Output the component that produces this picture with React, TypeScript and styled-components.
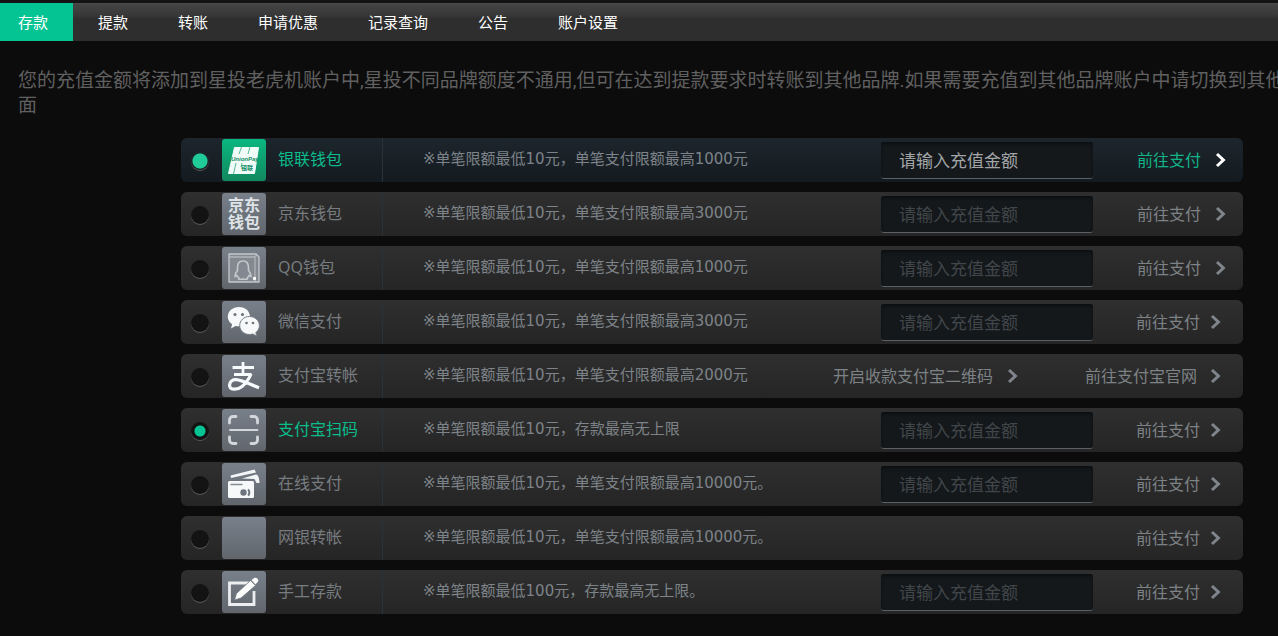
import React from "react";
import styled, { createGlobalStyle, css } from "styled-components";

const GREEN = "#05c493";

const GlobalStyle = createGlobalStyle`
  *, *::before, *::after { box-sizing: border-box; }
  body {
    margin: 0;
    background: #0c0c0c;
    color: #7b8085;
    font-family: "Noto Sans", "Noto Sans CJK SC", sans-serif;
    overflow-x: hidden;
  }
`;

const Page = styled.div`
  border-top: 3px solid #131313;
  overflow: hidden;
  padding-bottom: 20px;
`;

const NavBar = styled.nav`
  display: flex;
  height: 38px;
  background: linear-gradient(#4a4a4a 0, #434343 2px, #383838 12px, #2e2e2e 16px, #2e2e2e 100%);
`;

const NavLink = styled.a<{ $current?: boolean }>`
  display: flex;
  align-items: center;
  padding: 0 25px;
  font-family: "Noto Sans CJK SC", sans-serif;
  font-size: 15px;
  line-height: 22px;
  color: #fff;
  text-decoration: none;
  ${(p) =>
    p.$current &&
    css`
      padding-left: 18px;
      background: ${GREEN};
    `}
`;

const Notice = styled.p`
  margin: 27px 0 0;
  padding-left: 18px;
  font-family: Roboto, "Noto Sans CJK SC", sans-serif;
  font-size: 19px;
  line-height: 25px;
  color: #606060;
  white-space: nowrap;
`;

const MethodList = styled.form`
  display: flex;
  flex-direction: column;
  gap: 10px;
  margin: 20px 35px 0 181px;
`;

const Row = styled.div<{ $active?: boolean }>`
  display: flex;
  align-items: center;
  height: 44px;
  padding-left: 10px;
  border-radius: 6px;
  background: ${(p) =>
    p.$active ? "linear-gradient(#1e262d, #131a20)" : "linear-gradient(#2f2f2f, #252525)"};
`;

const Radio = styled.input<{ $large?: boolean }>`
  appearance: none;
  flex: none;
  width: 18px;
  height: 18px;
  margin: 2px 13px 0 0;
  border-radius: 50%;
  background: #131313;
  box-shadow: 0 1px 0 #5a5a5a;
  &:checked {
    background: ${(p) =>
      p.$large
        ? "radial-gradient(circle at 9px 9px, #20cc98 7px, #1c2a2c 8px)"
        : `radial-gradient(circle, ${GREEN} 5px, #131313 6px)`};
  }
`;

const MethodLabel = styled.label<{ $green?: boolean }>`
  display: flex;
  align-items: center;
  gap: 12px;
  flex: none;
  width: 161px;
  height: 44px;
  border-right: 1px solid #28323a;
  font-size: 16px;
  line-height: 22px;
  color: ${(p) => (p.$green ? "#0bbd8b" : "#777c80")};
`;

const MethodName = styled.span`
  padding-bottom: 3px;
`;

const Tile = styled.svg<{ $active?: boolean }>`
  flex: none;
  width: 44px;
  height: 42px;
  border-radius: 3px;
  background: ${(p) =>
    p.$active ? "linear-gradient(#0ab67f, #12895f)" : "linear-gradient(#78808a, #61666d)"};
`;

const Limit = styled.span`
  flex: 1;
  min-width: 0;
  padding: 0 0 3px 40px;
  font-family: "DejaVu Sans", "Noto Sans CJK SC", sans-serif;
  font-size: 15px;
  line-height: 22px;
  color: #7d8388;
  white-space: nowrap;
`;

const Amount = styled.input<{ $active?: boolean }>`
  flex: none;
  width: 212px;
  height: 37px;
  padding: 0 18px;
  border: 0;
  border-bottom: 1px solid #5b6166;
  border-radius: 3px;
  outline: 0;
  background: #14181b;
  box-shadow: inset 0 2px 3px #0c0f11;
  color: #b4b7b9;
  font-family: "Noto Sans CJK SC", sans-serif;
  font-size: 17px;
  line-height: 24px;
  &::placeholder {
    opacity: 1;
    color: ${(p) => (p.$active ? "#a3a6a8" : "#41464a")};
  }
`;

const Action = styled.a<{ $active?: boolean; $wide?: boolean }>`
  display: flex;
  align-items: center;
  justify-content: flex-end;
  gap: ${(p) => (p.$wide ? 14 : 10)}px;
  flex: none;
  width: 150px;
  padding-right: ${(p) => (p.$wide ? 17 : 22)}px;
  font-size: 16px;
  line-height: 22px;
  white-space: nowrap;
  text-decoration: none;
  color: ${(p) => (p.$active ? "#12b487" : "#7d8286")};
`;

const SiteAction = styled(Action)`
  width: auto;
  gap: 13px;
`;

const QrAction = styled(Action)`
  width: auto;
  padding-right: 67px;
`;

const ChevronSvg = styled.svg`
  flex: none;
  width: 11px;
  height: 16px;
`;

function Chevron({ color = "#7f858b" }: { color?: string }) {
  return (
    <ChevronSvg viewBox="0 0 11 16" aria-hidden="true">
      <path d="M2 2l6.400 6L2 14" fill="none" stroke={color} strokeWidth="3" />
    </ChevronSvg>
  );
}

type IconName = "union" | "jd" | "qq" | "wechat" | "alipay" | "scan" | "card" | "blank" | "edit";

const drawings: Record<IconName, React.ReactNode> = {
  union: (
    <>
      <path d="M12.500 8.500H36.500L32.500 34.500H6.500z" fill="#f1fbf7" stroke="#f1fbf7" strokeLinejoin="round" />
      <path d="M19.500 8l-2.500 7M28 8l-2 7M14 24l-2.500 11M20 24l-1 4" stroke="#58b996" strokeWidth="1" />
      <text x="9" y="22" fontSize="6" fontWeight="700" fontStyle="italic" fontFamily="Liberation Sans, sans-serif" fill="#128b65">
        UnionPay
      </text>
      <text x="19" y="31" fontSize="6" fontWeight="700" fontFamily="Noto Sans CJK SC, sans-serif" fill="#128b65">
        银联
      </text>
    </>
  ),
  jd: (
    <g fontSize="16" fontWeight="700" fontFamily="Noto Sans CJK SC, sans-serif" fill="#dfe3e6">
      <text x="6" y="18">京东</text>
      <text x="6" y="35">钱包</text>
    </g>
  ),
  qq: (
    <g fill="none" stroke="#c3c8cd" strokeWidth="1.3">
      <path d="M7 7h27l3 3v25H7z" fill="#838990" />
      <path d="M7 10h26v25M33 10l2-3" opacity="0.7" />
      <path
        d="M21 14c-4 0-5.500 3-5.500 6.500v3c-2 2-2.500 4-2.500 6l2-1c.5 1 1 1.800 1.800 2.500-1 1.500 1 1.500 4.200 1 3.200.5 5.200.5 4.200-1 .8-.7 1.300-1.500 1.800-2.500l2 1c0-2-.5-4-2.500-6v-3c0-3.500-1.500-6.500-5.500-6.500z"
        strokeWidth="1.600"
      />
      <circle cx="32.500" cy="31.500" r="1" fill="#fff" stroke="#fff" />
    </g>
  ),
  wechat: (
    <>
      <path d="M17 6C10.500 6 5.800 10.300 5.800 15.700c0 3.200 1.700 5.700 4.300 7.500L9 27.500l4.500-2.600c1.200.3 2.400.4 3.700.4C23.500 25.300 28 21 28 15.700 28 10.300 23.500 6 17 6z" fill="#f7f8f9" />
      <path
        d="M27.500 15.500c-5.600 0-9.800 4-9.800 9s4.200 9 9.800 9c1.200 0 2.300-.2 3.300-.5l4 2.200-1-3.600c2.200-1.700 3.600-4.200 3.600-7.100 0-5-4.300-9-9.900-9z"
        fill="#f7f8f9"
        stroke="#777d85"
      />
      <g fill="#6c727a">
        <circle cx="13" cy="13.500" r="1.500" />
        <circle cx="20.500" cy="13.500" r="1.500" />
        <circle cx="24.500" cy="22" r="1.300" />
        <circle cx="31" cy="22" r="1.300" />
      </g>
    </>
  ),
  alipay: (
    <g fill="none" stroke="#f5fbfd" strokeWidth="2.800">
      <path d="M10.500 12.500h21.500M21 7v12M12 19.500h17.500" />
      <path d="M29 19c-2 5-5 9-9 12.500-4 3.300-11.500 4-12.300-.2C7 27 10 24.500 14 24.700c6 .3 14.500 5 23 8" strokeWidth="3.200" />
    </g>
  ),
  scan: (
    <g fill="none" stroke="#d3d7db" strokeWidth="2.800" strokeLinecap="round">
      <path d="M14 7.500H11a3.500 3.500 0 0 0-3.500 3.500v3M29 7.500h3a3.500 3.500 0 0 1 3.500 3.500v3M14 34.500H11a3.500 3.500 0 0 1-3.500-3.500v-3M29 34.500h3a3.500 3.500 0 0 0 3.500-3.500v-3" />
      <path d="M8 21h27.500" strokeWidth="2" />
    </g>
  ),
  card: (
    <>
      <path d="M9 15L8.500 12.500 32.500 6.500 34 9.500z" fill="#f4f5f6" />
      <path d="M20 15.500l14-4c2.500 0 3.500 5 3.500 8.500h-3l-2-4z" fill="#f4f5f6" />
      <rect x="6" y="18" width="26" height="17" rx="1.500" fill="#f7f8f9" />
      <path d="M8.500 21.500h12" stroke="#858b92" strokeWidth="1.500" />
      <circle cx="21.500" cy="29.500" r="3.200" fill="#6e747b" />
      <path d="M26 26.500a4 4 0 0 1 0 6" fill="none" stroke="#6e747b" strokeWidth="2" />
    </>
  ),
  blank: null,
  edit: (
    <>
      <path d="M27 12H7.500v21.500h24.500V20" fill="none" stroke="#eceef0" strokeWidth="2.800" />
      <path d="M12.500 29l2-6.500L28.500 9.500l5 5L19 27z" fill="#fafbfb" stroke="#70767d" strokeWidth="0.800" />
      <path d="M29.500 9l3-2.200c2.300-.8 4.600 1.700 3.500 3.800l-2.500 2.800z" fill="#fafbfb" />
    </>
  ),
};

interface Method {
  id: string;
  name: string;
  icon: IconName;
  limit: string;
  active?: boolean;
  green?: boolean;
  wide?: boolean;
  field?: boolean;
  qr?: boolean;
}

const methods: Method[] = [
  { id: "union", name: "银联钱包", icon: "union", limit: "※单笔限额最低10元，单笔支付限额最高1000元", active: true, green: true, wide: true, field: true },
  { id: "jd", name: "京东钱包", icon: "jd", limit: "※单笔限额最低10元，单笔支付限额最高3000元", wide: true, field: true },
  { id: "qq", name: "QQ钱包", icon: "qq", limit: "※单笔限额最低10元，单笔支付限额最高1000元", wide: true, field: true },
  { id: "wechat", name: "微信支付", icon: "wechat", limit: "※单笔限额最低10元，单笔支付限额最高3000元", field: true },
  { id: "alipay", name: "支付宝转帐", icon: "alipay", limit: "※单笔限额最低10元，单笔支付限额最高2000元", qr: true },
  { id: "scan", name: "支付宝扫码", icon: "scan", limit: "※单笔限额最低10元，存款最高无上限", green: true, field: true },
  { id: "online", name: "在线支付", icon: "card", limit: "※单笔限额最低10元，单笔支付限额最高10000元。", field: true },
  { id: "bank", name: "网银转帐", icon: "blank", limit: "※单笔限额最低10元，单笔支付限额最高10000元。" },
  { id: "manual", name: "手工存款", icon: "edit", limit: "※单笔限额最低100元，存款最高无上限。", field: true },
];

const tabs = ["存款", "提款", "转账", "申请优惠", "记录查询", "公告", "账户设置"];

function MethodRow({ m }: { m: Method }) {
  return (
    <Row $active={m.active}>
      <Radio
        type="radio"
        id={m.id}
        name={m.id === "scan" ? "scan-method" : "method"}
        defaultChecked={m.green}
        $large={m.active}
      />
      <MethodLabel htmlFor={m.id} $green={m.green}>
        <Tile viewBox="0 0 44 42" $active={m.active} aria-hidden="true">
          {drawings[m.icon]}
        </Tile>
        <MethodName>{m.name}</MethodName>
      </MethodLabel>
      <Limit>{m.limit}</Limit>
      {m.field && (
        <Amount type="text" placeholder="请输入充值金额" aria-label={m.name} $active={m.active} />
      )}
      {m.qr ? (
        <>
          <QrAction href="#qr" $wide>
            开启收款支付宝二维码
            <Chevron />
          </QrAction>
          <SiteAction href={`#${m.id}`}>
            前往支付宝官网
            <Chevron />
          </SiteAction>
        </>
      ) : (
        <Action href={`#${m.id}`} $active={m.active} $wide={m.wide}>
          前往支付
          <Chevron color={m.active ? "#fff" : undefined} />
        </Action>
      )}
    </Row>
  );
}

export default function App() {
  return (
    <Page>
      <GlobalStyle />
      <NavBar>
        {tabs.map((t, i) => (
          <NavLink key={t} href="#" $current={i === 0}>
            {t}
          </NavLink>
        ))}
      </NavBar>
      <Notice>
        您的充值金额将添加到星投老虎机账户中,星投不同品牌额度不通用,但可在达到提款要求时转账到其他品牌.如果需要充值到其他品牌账户中请切换到其他品
        <br />面
      </Notice>
      <MethodList>
        {methods.map((m) => (
          <MethodRow key={m.id} m={m} />
        ))}
      </MethodList>
    </Page>
  );
}
